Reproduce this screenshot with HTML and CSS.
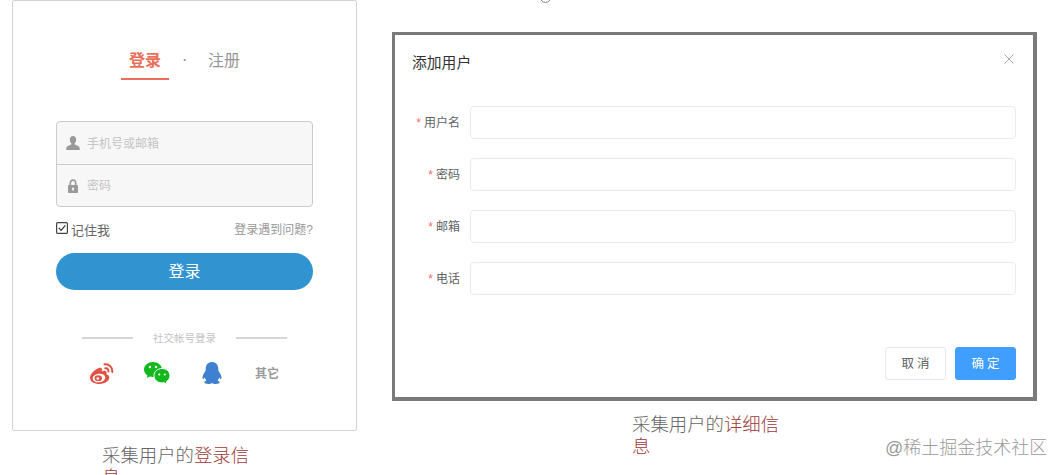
FILE: index.html
```html
<!DOCTYPE html>
<html lang="zh-CN">
<head>
<meta charset="utf-8">
<title>采集用户信息</title>
<link rel="stylesheet" href="styles.css">
</head>
<body>
<div class="page">
  <span class="ring"></span>
  <section class="column-left">
    <div class="login-card">
      <nav class="tabs">
        <a class="tab tab-active">登录</a>
        <span class="tab-dot">·</span>
        <a class="tab">注册</a>
      </nav>
      <div class="field-group">
        <div class="field-row">
          <svg class="field-icon" viewBox="0 0 14 14"><path fill="#999" d="M7 0C5 0 3.800 1.500 3.800 3.600c0 1.500.6 2.900 1.500 3.700v1.200C3.800 9.300.6 10 .3 12v2h13.400v-2c-.3-2-3.500-2.700-5-3.500V7.300c.9-.8 1.500-2.200 1.500-3.700C10.200 1.500 9 0 7 0z"/></svg>
          <span class="placeholder">手机号或邮箱</span>
        </div>
        <div class="field-row">
          <svg class="field-icon" viewBox="0 0 14 14"><path fill="#999" fill-rule="evenodd" d="M3.500 6V4.200C3.500 1.800 5 .3 7 .3s3.500 1.500 3.500 3.900V6h.6c.6 0 .9.400.9 1v6c0 .6-.3 1-.9 1H2.900c-.6 0-.9-.4-.9-1V7c0-.6.3-1 .9-1zm1.600 0h3.800V4.200C8.900 2.800 8.100 1.900 7 1.900s-1.900.9-1.900 2.300zM7 8.500a1.200 1.200 0 0 0-.6 2.200v1.100h1.200v-1.100A1.200 1.200 0 0 0 7 8.500z"/></svg>
          <span class="placeholder">密码</span>
        </div>
      </div>
      <div class="remember-row">
        <label class="remember">
          <svg class="checkbox" viewBox="0 0 12 12"><rect x=".6" y=".6" width="10.800" height="10.800" rx="1" fill="#fff" stroke="#444" stroke-width="1.200"/><path d="M2.800 5.800l2.300 2.500 4.200-5" fill="none" stroke="#333" stroke-width="1.200"/></svg>
          <span>记住我</span>
        </label>
        <a class="trouble">登录遇到问题?</a>
      </div>
      <button class="login-button" type="button">登录</button>
      <div class="social-title">
        <span class="social-line"></span>
        <span>社交帐号登录</span>
        <span class="social-line"></span>
      </div>
      <div class="social-icons">
        <svg class="icon-weibo" viewBox="0 0 24 21">
          <path fill="#e05244" d="M10 4.500C5 6.500 0 10.500 0 15c0 3.800 4.500 6 9.500 6 6 0 9.800-3.300 9.800-6.400 0-2-1.700-3-3-3.300.7-1.700.4-3.100-1-3.400-1.100-.2-2.500.2-3.500.7.400-1.700.2-3-.5-3.500-.5-.3-1.400-.3-1.800-.1z"/>
          <ellipse cx="9" cy="15" rx="6.300" ry="4.300" fill="#fff" transform="rotate(-8 9 15)"/>
          <ellipse cx="8.300" cy="15.200" rx="3.700" ry="2.900" fill="#e05244"/>
          <circle cx="7.800" cy="15.500" r="1.300" fill="#fff"/>
          <path d="M14.500 1.300c4.500-.8 8.300 3 7.700 7.700M15.300 5.300c2-.3 3.500 1.300 3.100 3.300" fill="none" stroke="#e05244" stroke-width="2" stroke-linecap="round"/>
        </svg>
        <svg class="icon-wechat" viewBox="0 0 26 22">
          <path fill="#12b91e" d="M9 0C4 0 0 3.300 0 7.500c0 2.500 1.300 4.500 3.400 5.900l-.5 2.700 3-1.700c1 .3 2 .5 3.100.5C14 14.900 18 11.500 18 7.500 18 3.300 14 0 9 0z"/>
          <path fill="#12b91e" stroke="#fff" stroke-width="1" d="M18 6.500c-4.500 0-8 3.200-8 7.200 0 4 3.500 7.200 8 7.200.7 0 1.400-.1 2-.2l2.800 1.300-.5-2.300c2.200-1.300 3.700-3.500 3.700-6 0-4-3.500-7.200-8-7.200z"/>
          <circle cx="6" cy="5" r="1.200" fill="#fff"/><circle cx="12" cy="5" r="1.200" fill="#fff"/>
          <circle cx="15.200" cy="12.500" r="1.100" fill="#fff"/><circle cx="20.800" cy="12.500" r="1.100" fill="#fff"/>
        </svg>
        <svg class="icon-qq" viewBox="0 0 20 22">
          <path fill="#3f80d0" d="M10 0C6 0 3.700 3 3.700 6.800c0 1 0 1.500-.2 2.300C2 11 .3 14 .5 16.200c.2 1.200 1.200.8 2.200-.7.3 1.100.9 2.100 1.700 2.900-1.300.5-2.300 1.200-2.100 2.200.2 1 2 1.400 4 1.400 1.500 0 2.800-.4 3.700-1 .9.600 2.200 1 3.700 1 2 0 3.800-.4 4-1.400.2-1-.8-1.700-2.100-2.200.8-.8 1.400-1.800 1.700-2.900 1 1.500 2 1.900 2.200.7.200-2.200-1.500-5.200-3-7.100-.2-.8-.2-1.300-.2-2.300C16.300 3 14 0 10 0z"/>
        </svg>
        <a class="social-other">其它</a>
      </div>
    </div>
    <p class="caption caption-left">采集用户的<span class="caption-accent">登录信</span><br><span class="caption-accent">息</span></p>
  </section>
  <section class="column-right">
    <div class="dialog">
      <header class="dialog-header">
        <h2 class="dialog-title">添加用户</h2>
        <svg class="dialog-close" viewBox="0 0 10 10"><path d="M.5.500l9 9M9.500.500l-9 9" stroke="#a8a8a8" stroke-width="1" fill="none"/></svg>
      </header>
      <form class="dialog-form">
        <div class="form-row"><label class="form-label"><i class="star">*</i>用户名</label><input class="form-input" type="text"></div>
        <div class="form-row"><label class="form-label"><i class="star">*</i>密码</label><input class="form-input" type="text"></div>
        <div class="form-row"><label class="form-label"><i class="star">*</i>邮箱</label><input class="form-input" type="text"></div>
        <div class="form-row"><label class="form-label"><i class="star">*</i>电话</label><input class="form-input" type="text"></div>
      </form>
      <footer class="dialog-footer">
        <button class="btn" type="button">取消</button>
        <button class="btn btn-primary" type="button">确定</button>
      </footer>
    </div>
    <p class="caption caption-right">采集用户的<span class="caption-accent">详细信</span><br><span class="caption-accent">息</span></p>
  </section>
  <span class="watermark">@稀土掘金技术社区</span>
</div>
</body>
</html>
```
FILE: styles.css
```css
* { box-sizing: border-box; }
html, body { margin: 0; padding: 0; background: #fff; }
body {
  font-family: "Liberation Sans", "Noto Sans CJK SC", sans-serif;
  width: 1062px;
  height: 475px;
  overflow: hidden;
}
.page {
  position: relative;
  display: flex;
  align-items: flex-start;
  width: 1062px;
  height: 475px;
  overflow: hidden;
  padding-left: 12px;
}
.ring {
  position: absolute;
  left: 540px;
  top: -8px;
  width: 11px;
  height: 11px;
  border: 1px solid #888;
  border-radius: 50%;
}
.column-left { width: 345px; flex: none; }
.column-right { width: 645px; flex: none; margin-left: 35px; padding-top: 32px; }

/* login card */
.login-card {
  height: 431px;
  padding: 49px 43px 0;
  border: 1px solid #d4d4d4;
  border-radius: 2px;
}
.tabs { display: flex; justify-content: center; }
.tab {
  width: 48px;
  height: 30px;
  font-size: 16px;
  line-height: 22px;
  text-align: center;
  color: #969696;
}
.tab-active {
  height: 30px;
  font-weight: 700;
  color: #ea6f5a;
  border-bottom: 2px solid #ea6f5a;
}
.tab-dot {
  width: 31px;
  padding-left: 1px;
  font-size: 12px;
  font-weight: 700;
  line-height: 20px;
  text-align: center;
  color: #969696;
}
.field-group {
  margin-top: 41px;
  height: 86px;
  background: #f7f7f7;
  border: 1px solid #ccc;
  border-radius: 4px;
}
.field-row {
  display: flex;
  align-items: center;
  height: 42px;
  padding-left: 9px;
}
.field-row + .field-row { border-top: 1px solid #ccc; }
.field-icon { width: 14px; height: 14px; flex: none; }
.placeholder {
  margin-left: 7px;
  padding-bottom: 2px;
  font-size: 12px;
  color: #c4c4c4;
}
.remember-row {
  display: flex;
  justify-content: space-between;
  align-items: center;
  margin-top: 14px;
  height: 18px;
}
.remember { display: flex; align-items: center; font-size: 13px; color: #666; }
.remember span { margin-left: 3px; padding-bottom: 1px; }
.checkbox { width: 12px; height: 12px; position: relative; top: -2px; }
.trouble { font-size: 12px; color: #999; position: relative; top: -2px; }
.login-button {
  display: block;
  width: 100%;
  height: 37px;
  margin-top: 14px;
  padding: 0 0 3px;
  border: 0;
  border-radius: 25px;
  background: #3194d0;
  color: #fff;
  font-family: inherit;
  font-size: 16px;
}
.social-title {
  display: flex;
  justify-content: center;
  align-items: center;
  gap: 20px;
  margin-top: 38px;
  height: 20px;
  font-size: 10.5px;
  line-height: 18px;
  color: #c4c4c4;
}
.social-line { width: 51px; height: 2px; background: #d6d6d6; }
.social-icons {
  display: flex;
  justify-content: center;
  align-items: center;
  gap: 30px;
  margin-top: 13px;
  height: 24px;
}
.icon-weibo { width: 24px; height: 21px; }
.icon-wechat { width: 26px; height: 22px; }
.icon-qq { width: 20px; height: 22px; margin-left: 2px; }
.social-other { margin-left: 3px; padding-bottom: 2px; font-size: 12px; font-weight: 700; color: #999; }

/* captions */
.caption {
  margin: 0;
  width: 148px;
  font-family: "Liberation Serif", "Noto Sans CJK SC", serif;
  font-size: 18.4px;
  font-weight: 300;
  line-height: 22px;
  color: #666;
  white-space: nowrap;
}
.caption-left { margin-left: 90px; margin-top: 14px; }
.caption-right { margin-left: 240px; margin-top: 13px; }
.caption-accent { color: #a03a3a; }

/* dialog */
.dialog {
  display: flex;
  flex-direction: column;
  height: 369px;
  background: #fff;
  border-style: solid;
  border-color: #7a7a7a;
  border-width: 3px 4px 4px 3px;
}
.dialog-header {
  position: relative;
  height: 71px;
  padding: 17px 17px 0;
}
.dialog-title {
  margin: 0;
  font-size: 14.8px;
  font-weight: 400;
  line-height: 22px;
  color: #303133;
}
.dialog-close {
  position: absolute;
  right: 19px;
  top: 19px;
  width: 10px;
  height: 10px;
}
.dialog-form {
  display: flex;
  flex-direction: column;
  gap: 19px;
  padding-right: 17px;
}
.form-row { display: flex; align-items: center; height: 33px; }
.form-label {
  width: 65px;
  padding-bottom: 2px;
  flex: none;
  text-align: right;
  font-size: 12px;
  color: #606266;
}
.star {
  margin-right: 3px;
  font-style: normal;
  color: #f56c6c;
}
.form-input {
  flex: 1;
  min-width: 0;
  height: 33px;
  margin-left: 10px;
  border: 1px solid #e9ebef;
  border-radius: 4px;
  background: #fff;
}
.dialog-footer {
  display: flex;
  justify-content: flex-end;
  gap: 9px;
  margin-top: auto;
  padding: 0 17px 17px 0;
}
.btn {
  width: 61px;
  height: 33px;
  padding: 0 0 2px 3px;
  border: 1px solid #e8eaee;
  border-radius: 3px;
  background: #fff;
  color: #606266;
  font-family: inherit;
  font-size: 12.500px;
  letter-spacing: 3px;
}
.btn-primary {
  border-color: #409eff;
  background: #409eff;
  color: #fff;
}
.watermark {
  position: absolute;
  left: 885px;
  top: 437px;
  font-size: 18px;
  line-height: 22px;
  font-weight: 300;
  color: #9a9a9a;
  white-space: nowrap;
}
```
